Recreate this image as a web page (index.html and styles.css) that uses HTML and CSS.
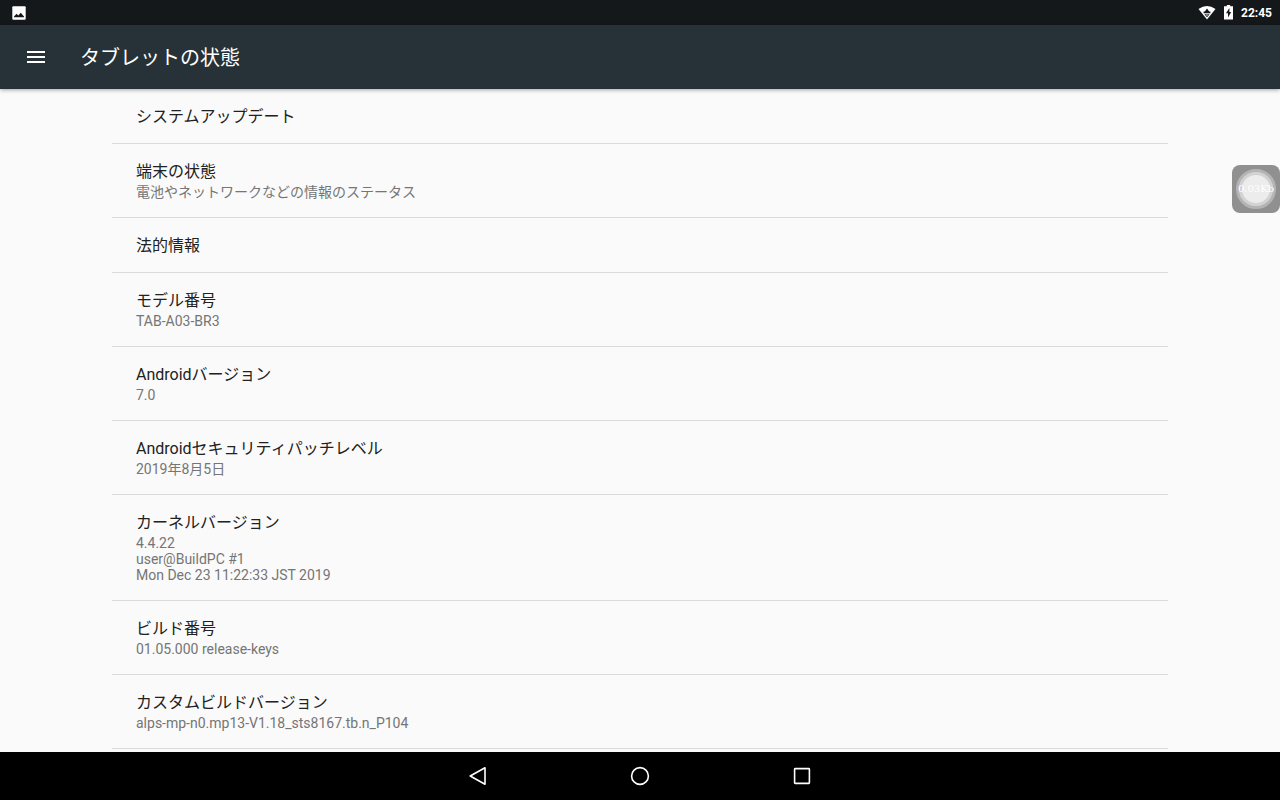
FILE: index.html
```html
<!DOCTYPE html>
<html lang="ja">
<head>
    <meta charset="UTF-8">
    <meta name="viewport" content="width=device-width, initial-scale=1.0">
    <title>タブレットの状態</title>
    <link rel="stylesheet" href="styles.css">
</head>
<body>
    <div class="status-bar">
        <svg class="notification" width="14" height="14" viewBox="0 0 14 14">
            <rect x="0.3" y="0.3" width="13.4" height="13.4" rx="1" fill="#fff"/>
            <path d="M2 11.2 V10.4 L4.6 7.8 L6.2 9.4 L8.8 6.8 L12 10.4 V11.2 Z" fill="#14181b"/>
        </svg>
        <div class="status-icons">
            <svg width="18" height="16" viewBox="0 0 18 16">
                <path d="M0.5 4 Q9 -1.8 17.5 4 L9 14.4 Z" fill="#fff"/>
                <path d="M9 3.4 L11.2 6.4 H12.4 V8.2 H5.6 V6.4 H6.8 Z M6.4 9.2 H11.6 L9 12.2 Z" fill="#14181b"/>
                <path d="M8.2 9.2 H9.8 V11 H8.2 Z" fill="#999"/>
            </svg>
            <svg width="9" height="16" viewBox="0 0 9 16">
                <path d="M2.8 0 H6.2 V1.3 H9 V14.5 H0 V1.3 H2.8 Z" fill="#fff"/>
                <path d="M5.4 3.1 L2 8.3 H4 V12.5 L7.2 7.1 H5.4 Z" fill="#14181b"/>
            </svg>
            <span class="clock">22:45</span>
        </div>
    </div>

    <header class="toolbar">
        <button class="menu-button" type="button" aria-label="メニュー">
            <svg width="18" height="12" viewBox="0 0 18 12">
                <path d="M0 0H18V2H0ZM0 5H18V7H0ZM0 10H18V12H0Z" fill="#fff"/>
            </svg>
        </button>
        <h1>タブレットの状態</h1>
    </header>

    <main class="content">
        <ul class="settings">
            <li>
                <h2>システムアップデート</h2>
            </li>
            <li>
                <h2>端末の状態</h2>
                <p>電池やネットワークなどの情報のステータス</p>
            </li>
            <li>
                <h2>法的情報</h2>
            </li>
            <li>
                <h2>モデル番号</h2>
                <p>TAB-A03-BR3</p>
            </li>
            <li>
                <h2>Androidバージョン</h2>
                <p>7.0</p>
            </li>
            <li>
                <h2>Androidセキュリティパッチレベル</h2>
                <p>2019年8月5日</p>
            </li>
            <li>
                <h2>カーネルバージョン</h2>
                <p>4.4.22<br>user@BuildPC #1<br>Mon Dec 23 11:22:33 JST 2019</p>
            </li>
            <li>
                <h2>ビルド番号</h2>
                <p>01.05.000 release-keys</p>
            </li>
            <li>
                <h2>カスタムビルドバージョン</h2>
                <p>alps-mp-n0.mp13-V1.18_sts8167.tb.n_P104</p>
            </li>
        </ul>
    </main>

    <!-- floating network speed bubble -->
    <div class="speed">
        <div class="speed-ring"><span>0.03Kb</span></div>
    </div>

    <nav class="nav-bar">
        <button type="button" aria-label="戻る">
            <svg width="20" height="20" viewBox="0 0 20 20">
                <path d="M17 1.8 V18.2 L2.2 10 Z" fill="none" stroke="#fff" stroke-width="1.6" stroke-linejoin="round"/>
            </svg>
        </button>
        <button type="button" aria-label="ホーム">
            <svg width="20" height="20" viewBox="0 0 20 20">
                <circle cx="10" cy="10" r="8.4" fill="none" stroke="#fff" stroke-width="1.6"/>
            </svg>
        </button>
        <button type="button" aria-label="最近">
            <svg width="20" height="20" viewBox="0 0 20 20">
                <rect x="2.6" y="2.6" width="14.8" height="14.8" rx="0.6" fill="none" stroke="#fff" stroke-width="1.6"/>
            </svg>
        </button>
    </nav>
</body>
</html>
```

FILE: styles.css
```css
body {
    font-family: Roboto, "Noto Sans CJK JP", sans-serif;
    background-color: #fafafa;
    margin: 0;
    height: 100vh;
    display: flex;
    flex-direction: column;
    overflow: hidden;
}

h1, h2, p, ul {
    margin: 0;
    padding: 0;
    font-weight: 400;
}

svg {
    display: block;
}

button {
    background: none;
    border: none;
    padding: 0;
    cursor: pointer;
}

.status-bar {
    flex: none;
    display: flex;
    justify-content: space-between;
    align-items: center;
    height: 25px;
    padding: 0 8px 0 12px;
    background-color: #14181b;
    color: #fff;
}

.status-icons {
    display: flex;
    align-items: center;
    gap: 8px;
}

.clock {
    font-size: 12px;
    font-weight: 700;
    line-height: 16px;
}

.toolbar {
    flex: none;
    position: relative;
    display: flex;
    align-items: center;
    height: 64px;
    padding: 0 8px;
    gap: 16px;
    background-color: #263238;
    box-shadow: 0 1px 4px rgba(0, 0, 0, 0.35);
}

.menu-button {
    display: flex;
    align-items: center;
    justify-content: center;
    width: 56px;
    height: 56px;
}

.toolbar h1 {
    padding-top: 2px;
    color: #fff;
    font-size: 20px;
    line-height: 28px;
}

.content {
    flex: 1;
    min-height: 0;
    overflow: hidden;
    padding: 0 112px;
}

.settings {
    list-style: none;
}

.settings li {
    padding: 16px 24px 14px;
    border-bottom: 1px solid #dadada;
}

.settings h2 {
    color: #212121;
    font-size: 16px;
    line-height: 24px;
}

.settings p {
    padding-bottom: 3px;
    color: #757575;
    font-size: 14px;
    line-height: 16px;
}

/* sits over the list at the right edge */
.speed {
    position: absolute;
    top: 165px;
    right: 0;
    display: flex;
    align-items: center;
    justify-content: center;
    width: 48px;
    height: 48px;
    border-radius: 8px;
    background-color: #909090;
}

.speed-ring {
    display: flex;
    align-items: center;
    justify-content: center;
    box-sizing: border-box;
    width: 40px;
    height: 40px;
    border: 3px solid #b4b4b4;
    border-radius: 50%;
    background-color: #ececec;
    box-shadow: inset 0 0 0 3px #d2d2d2;
}

.speed span {
    color: #fff;
    font-family: "DejaVu Serif", serif;
    font-size: 10px;
    line-height: 12px;
}

.nav-bar {
    flex: none;
    display: flex;
    align-items: center;
    justify-content: center;
    height: 48px;
    background-color: #000;
}

.nav-bar button {
    display: flex;
    align-items: center;
    justify-content: center;
    width: 162px;
    height: 48px;
}
```
